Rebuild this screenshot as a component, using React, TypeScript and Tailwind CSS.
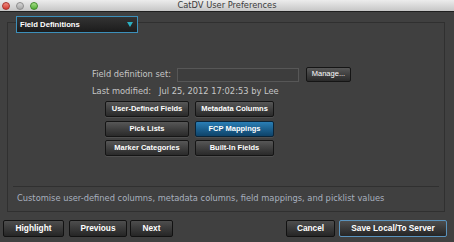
import React from 'react'

const gridButtons = [
  { label: 'User-Defined Fields', active: false },
  { label: 'Metadata Columns', active: false },
  { label: 'Pick Lists', active: false },
  { label: 'FCP Mappings', active: true },
  { label: 'Marker Categories', active: false },
  { label: 'Built-In Fields', active: false },
]

function SmallButton({ label, active }: { label: string; active: boolean }) {
  return (
    <button
      className={
        active
          ? "h-[16px] rounded-[2px] border border-[#0a2438] bg-gradient-to-b from-[#2a7fb6] to-[#0e4369] text-white font-bold text-[7.5px] font-['Liberation_Sans',sans-serif] leading-none shadow-[0_1px_0_rgba(255,255,255,0.08)]"
          : "h-[16px] rounded-[2px] border border-[#151515] bg-gradient-to-b from-[#575757] to-[#2a2a2a] text-white font-bold text-[7.5px] font-['Liberation_Sans',sans-serif] leading-none shadow-[0_1px_0_rgba(255,255,255,0.08)]"
      }
    >
      {label}
    </button>
  )
}

function FooterButton({ label, className, focused }: { label: string; className: string; focused?: boolean }) {
  return (
    <button
      className={`${className} h-[17px] shrink-0 rounded-[2px] border ${
        focused ? 'border-[#5a93bd]' : 'border-[#121212]'
      } bg-gradient-to-b from-[#4e4e4e] to-[#262626] text-white font-bold text-[8.3px] font-['Liberation_Sans',sans-serif] leading-none`}
    >
      {label}
    </button>
  )
}

export default function App() {
  return (
    <div className="w-[454px] h-[242px] bg-[#404040] flex flex-col overflow-hidden font-['DejaVu_Sans',sans-serif]">
      {/* title bar */}
      <div className="h-[12px] shrink-0 grid grid-cols-[1fr_auto_1fr] items-center bg-gradient-to-b from-[#ececec] to-[#c6c6c6] border-b border-[#1f1f1f]">
        <div className="flex items-center gap-[6px] pl-[2px]">
          <span className="w-[8px] h-[8px] rounded-full bg-gradient-to-b from-[#f08a80] to-[#d2372f] border border-[#a8302a]" />
          <span className="w-[8px] h-[8px] rounded-full bg-gradient-to-b from-[#d6d6d6] to-[#a6a6a6] border border-[#8c8c8c]" />
          <span className="w-[8px] h-[8px] rounded-full bg-gradient-to-b from-[#a6df86] to-[#4fae31] border border-[#3f8a28]" />
        </div>
        <span className="text-[8.3px] leading-none text-[#3b3b3b]">CatDV User Preferences</span>
        <div />
      </div>

      {/* preferences panel */}
      <div className="pt-[10px] pl-[7px]">
        <div className="relative w-[438px] h-[190px] border border-[#303030] flex flex-col">
          {/* category dropdown */}
          <div className="absolute left-[8px] top-[-7px] w-[122px] h-[17px] flex items-center justify-between pl-[3px] pr-[4px] border border-[#3c8fba] bg-gradient-to-b from-[#333333] to-[#1c1c1c]">
            <span className="text-white font-bold text-[7.7px] font-['Liberation_Sans',sans-serif] leading-none">
              Field Definitions
            </span>
            <svg width="6" height="5" viewBox="0 0 6 5">
              <polygon points="0,0 6,0 3,5" fill="#2bb0c2" />
            </svg>
          </div>

          <div className="pt-[43px] pl-[84px] flex flex-col">
            <div className="h-[16px] flex items-center text-[8.3px] text-[#c6c6c6]">
              <span>Field definition set:</span>
              <div className="ml-[6px] w-[122px] h-[14px] mt-[1px] border border-[#575757] bg-[#3d3d3d]" />
              <button className="ml-[7px] w-[45px] h-[15px] rounded-[2px] border border-[#151515] bg-gradient-to-b from-[#575757] to-[#2a2a2a] text-white text-[7.5px] font-['Liberation_Sans',sans-serif] leading-none">
                Manage...
              </button>
            </div>
            <div className="mt-[3px] h-[12px] flex items-center text-[8.3px] text-[#c6c6c6]">
              <span className="w-[67px]">Last modified:</span>
              <span>Jul 25, 2012 17:02:53 by Lee</span>
            </div>
            <div className="mt-[4px] ml-[13px] grid grid-cols-[84px_79px] gap-x-[6px] gap-y-[3.5px]">
              {gridButtons.map((b) => (
                <SmallButton key={b.label} label={b.label} active={b.active} />
              ))}
            </div>
          </div>

          <div className="mt-auto mx-[5px] border-t border-[#303030] pt-[5px] pb-[7px] pl-[4px]">
            <p className="text-[8.3px] leading-[12px] text-[#a8b0bf]">
              Customise user-defined columns, metadata columns, field mappings, and picklist values
            </p>
          </div>
        </div>
      </div>

      {/* footer buttons */}
      <div className="mt-[8px] h-[17px] flex items-center pl-[3px] pr-[7px]">
        <FooterButton label="Highlight" className="w-[61px]" />
        <FooterButton label="Previous" className="ml-[5px] w-[58px]" />
        <FooterButton label="Next" className="ml-[3px] w-[43px]" />
        <FooterButton label="Cancel" className="ml-auto w-[49px]" />
        <FooterButton label="Save Local/To Server" className="ml-[4px] w-[108px]" focused />
      </div>
    </div>
  )
}
